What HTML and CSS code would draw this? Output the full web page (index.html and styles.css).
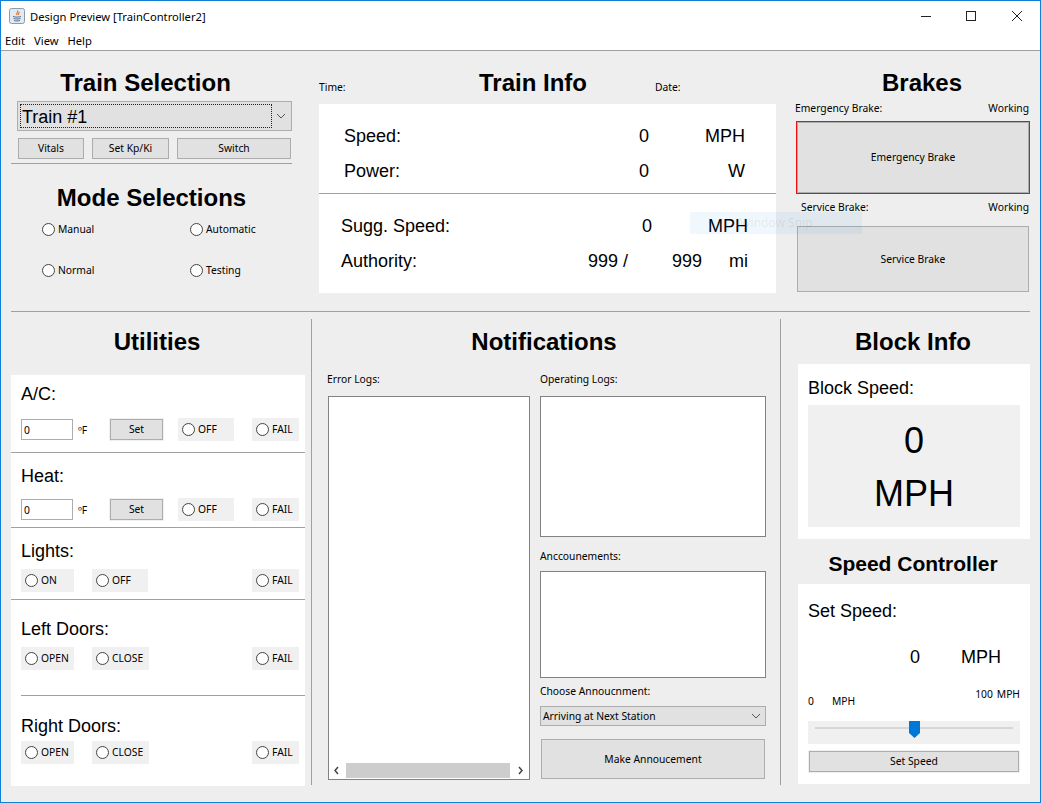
FILE: index.html
```html
<!DOCTYPE html>
<html lang="en">
  <head>
    <meta charset="UTF-8" />
    <title>Design Preview [TrainController2]</title>
    <link rel="stylesheet" href="styles.css">
  </head>
  <body>
    <div class="window">
      <div class="titlebar">
        <svg class="app-icon" width="16" height="16" viewBox="0 0 16 16">
          <rect x="0.5" y="0.5" width="15" height="15" rx="2" fill="#e4e9ef" stroke="#8c9aab" />
          <path d="M8.500 2.500c1.500 1.500-2 2.500-.5 4.500M10 4c.8 1-1.500 1.500-.5 3" fill="none" stroke="#e2762a" stroke-width="1.200" />
          <path d="M4 8.500c2 .8 6 .8 8 0M4.500 10.500c2 .7 5 .7 7 0M5 12.500c2 .6 4 .6 6 0" fill="none" stroke="#4a6f9c" />
        </svg>
        <span class="title-text">Design Preview [TrainController2]</span>
        <div class="win-controls">
          <svg width="10" height="10" viewBox="0 0 10 10"><path d="M0 5.500h10" stroke="#222" /></svg>
          <svg width="10" height="10" viewBox="0 0 10 10"><rect x="0.500" y="0.500" width="9" height="9" fill="none" stroke="#222" /></svg>
          <svg class="win-close" width="10" height="10" viewBox="0 0 10 10"><path d="M0 0l10 10M10 0L0 10" stroke="#222" /></svg>
        </div>
      </div>
      <div class="menubar">
        <span>Edit</span>
        <span>View</span>
        <span>Help</span>
      </div>

      <div class="top">
        <!-- Train selection and mode -->
        <section class="selection">
          <h2 class="title selection-title">Train Selection</h2>
          <div class="combo combo-large">
            <span class="combo-focus">Train #1</span>
            <svg class="chevron" width="10" height="6" viewBox="0 0 10 6"><path d="M1 1l4 4 4-4" fill="none" stroke="#555" /></svg>
          </div>
          <div class="train-buttons">
            <button class="btn btn-vitals">Vitals</button>
            <button class="btn btn-kp">Set Kp/Ki</button>
            <button class="btn btn-switch">Switch</button>
          </div>
          <div class="selection-rule"></div>
          <h2 class="title mode-title">Mode Selections</h2>
          <div class="mode-grid">
            <label class="radio"><input type="radio" />Manual</label>
            <label class="radio"><input type="radio" />Automatic</label>
            <label class="radio"><input type="radio" />Normal</label>
            <label class="radio"><input type="radio" />Testing</label>
          </div>
        </section>

        <!-- Train info -->
        <section class="info">
          <div class="info-head">
            <span class="small info-time">Time:</span>
            <h2 class="title info-title">Train Info</h2>
            <span class="small info-date">Date:</span>
          </div>
          <div class="info-panel">
            <div class="stats stats-top">
              <div class="stat"><span>Speed:</span><span class="num">0</span><span class="num">MPH</span></div>
              <div class="stat"><span>Power:</span><span class="num">0</span><span class="num">W</span></div>
            </div>
            <div class="stats stats-bottom">
              <div class="stat"><span>Sugg. Speed:</span><span class="num">0</span><span class="num">MPH</span></div>
              <div class="stat stat-authority"><span>Authority:</span><span class="num">999 /</span><span class="num">999</span><span class="num">mi</span></div>
            </div>
          </div>
        </section>

        <!-- Brakes -->
        <section class="brakes">
          <h2 class="title brakes-title">Brakes</h2>
          <div class="small brake-label"><span>Emergency Brake:</span><span>Working</span></div>
          <button class="btn btn-emergency">Emergency Brake</button>
          <div class="small brake-label brake-label-service"><span>Service Brake:</span><span>Working</span></div>
          <button class="btn btn-service">Service Brake</button>
        </section>

        <div class="snip-ghost">Window Snip</div>
      </div>

      <div class="main-rule"></div>

      <div class="bottom">
        <!-- Utilities -->
        <section class="utilities">
          <h2 class="title utilities-title">Utilities</h2>
          <div class="util-panel">
            <div class="util util-ac">
              <div class="util-label">A/C:</div>
              <div class="util-row">
                <div class="temp"><input class="temp-input" type="text" value="0" /><span class="small">ºF</span></div>
                <div class="set-box"><button class="btn">Set</button></div>
                <label class="radio radio-box box-off box-after-set"><input type="radio" />OFF</label>
                <label class="radio radio-box box-fail"><input type="radio" />FAIL</label>
              </div>
            </div>
            <div class="util util-heat">
              <div class="util-label">Heat:</div>
              <div class="util-row">
                <div class="temp"><input class="temp-input" type="text" value="0" /><span class="small">ºF</span></div>
                <div class="set-box"><button class="btn">Set</button></div>
                <label class="radio radio-box box-off box-after-set"><input type="radio" />OFF</label>
                <label class="radio radio-box box-fail"><input type="radio" />FAIL</label>
              </div>
            </div>
            <div class="util util-lights">
              <div class="util-label">Lights:</div>
              <div class="util-row">
                <label class="radio radio-box box-first"><input type="radio" />ON</label>
                <label class="radio radio-box box-off box-second"><input type="radio" />OFF</label>
                <label class="radio radio-box box-fail"><input type="radio" />FAIL</label>
              </div>
            </div>
            <div class="util util-left">
              <div class="util-label">Left Doors:</div>
              <div class="util-row">
                <label class="radio radio-box box-first"><input type="radio" />OPEN</label>
                <label class="radio radio-box box-close box-second"><input type="radio" />CLOSE</label>
                <label class="radio radio-box box-fail"><input type="radio" />FAIL</label>
              </div>
            </div>
            <div class="util-rule"></div>
            <div class="util util-right">
              <div class="util-label">Right Doors:</div>
              <div class="util-row">
                <label class="radio radio-box box-first"><input type="radio" />OPEN</label>
                <label class="radio radio-box box-close box-second"><input type="radio" />CLOSE</label>
                <label class="radio radio-box box-fail"><input type="radio" />FAIL</label>
              </div>
            </div>
          </div>
        </section>

        <div class="vline"></div>

        <!-- Notifications -->
        <section class="notifications">
          <h2 class="title notifications-title">Notifications</h2>
          <div class="notif-grid">
            <div class="notif-col">
              <div class="small notif-label error-label">Error Logs:</div>
              <div class="logbox error-box">
                <div class="hscroll">
                  <svg width="17" height="15" viewBox="0 0 17 15"><path d="M9 4l-3 3.500 3 3.500" fill="none" stroke="#444" stroke-width="1.500" /></svg>
                  <div class="hscroll-thumb"></div>
                  <svg width="19" height="15" viewBox="0 0 19 15"><path d="M9 4l3 3.500-3 3.500" fill="none" stroke="#444" stroke-width="1.500" /></svg>
                </div>
              </div>
            </div>
            <div class="notif-col">
              <div class="small notif-label">Operating Logs:</div>
              <div class="logbox ops-box"></div>
              <div class="small notif-label announce-label">Anccounements:</div>
              <div class="logbox announce-box"></div>
              <div class="small notif-label choose-label">Choose Annoucnment:</div>
              <div class="combo combo-small">
                <span>Arriving at Next Station</span>
                <svg class="chevron" width="10" height="6" viewBox="0 0 10 6"><path d="M1 1l4 4 4-4" fill="none" stroke="#555" /></svg>
              </div>
              <button class="btn btn-announce">Make Annoucement</button>
            </div>
          </div>
        </section>

        <div class="vline"></div>

        <!-- Block info and speed -->
        <section class="block-col">
          <h2 class="title block-title">Block Info</h2>
          <div class="white-panel block-panel">
            <div class="util-label">Block Speed:</div>
            <div class="block-speed">
              <div>0</div>
              <div>MPH</div>
            </div>
          </div>
          <h2 class="title speed-title">Speed Controller</h2>
          <div class="white-panel speed-panel">
            <div class="util-label">Set Speed:</div>
            <div class="speed-value"><span class="speed-num">0</span><span class="speed-unit">MPH</span></div>
            <div class="small speed-range">
              <div class="range-min"><span class="range-zero">0</span><span>MPH</span></div>
              <div class="range-max"><span>100</span><span>MPH</span></div>
            </div>
            <div class="slider">
              <div class="slider-track"></div>
              <svg class="slider-thumb" width="11" height="17" viewBox="0 0 11 17"><path d="M0 0h11v12l-5.500 5L0 12z" fill="#0078d7" /></svg>
            </div>
            <div class="speed-btn-box"><button class="btn">Set Speed</button></div>
          </div>
        </section>
      </div>
    </div>
  </body>
</html>
```

FILE: styles.css
```css
body {
  margin: 0;
  font-family: "Liberation Sans", Arial, sans-serif;
  color: #000;
}

.window {
  width: 1041px;
  height: 803px;
  box-sizing: border-box;
  border: 1px solid #0f7fd8;
  background-color: #eeeeee;
  display: flex;
  flex-direction: column;
  overflow: hidden;
}

.small,
.radio,
.btn,
.combo-small,
.temp-input {
  font-family: "Noto Sans", Tahoma, sans-serif;
  font-size: 10.3px;
}

.title {
  margin: 0;
  height: 28px;
  line-height: 28px;
  font-size: 24px;
  font-weight: bold;
  text-align: center;
}

/* Window chrome */
.titlebar {
  height: 30px;
  flex: none;
  background-color: white;
  display: flex;
  align-items: center;
  padding-left: 8px;
}

.app-icon {
  margin-right: 5px;
}

.title-text {
  font-family: "Noto Sans", sans-serif;
  font-size: 11.2px;
}

.win-controls {
  margin-left: auto;
  display: flex;
  gap: 35px;
  padding-right: 18px;
}

.win-close {
  margin-left: 1px;
}

.menubar {
  height: 19px;
  flex: none;
  background-color: white;
  border-bottom: 1px solid #a0a0a0;
  display: flex;
  gap: 9px;
  padding-left: 4px;
  font-family: "Noto Sans", sans-serif;
  font-size: 11.2px;
  line-height: 19px;
}

/* Common controls */
.btn {
  background-color: #e1e1e1;
  border: 1px solid #adadad;
  padding: 0 0 1px;
  color: #000;
  cursor: pointer;
}

.radio {
  display: flex;
  align-items: center;
  gap: 3px;
  height: 16px;
}

.radio input {
  appearance: none;
  width: 13px;
  height: 13px;
  margin: 0;
  flex: none;
  background-color: white;
  border: 1px solid #444;
  border-radius: 50%;
}

.combo {
  box-sizing: border-box;
  background-color: #e1e1e1;
  border: 1px solid #adadad;
  display: flex;
  align-items: center;
}

.chevron {
  margin-left: auto;
}

/* Top half */
.top {
  position: relative;
  display: flex;
  height: 260px;
  flex: none;
}

.selection {
  width: 275px;
  margin-left: 16px;
  margin-right: 19px;
  padding-top: 18px;
}

.selection-title {
  margin-right: 18px;
}

.combo-large {
  height: 30px;
  margin-top: 4px;
  padding: 2px 5px 2px 2px;
  font-size: 18px;
}

.combo-focus {
  box-sizing: border-box;
  width: 252px;
  height: 24px;
  line-height: 25px;
  padding-left: 1px;
  border: 1px dotted #222;
}

.train-buttons {
  display: flex;
  gap: 8px;
  margin: 7px 0 0 1px;
}

.train-buttons .btn {
  height: 21px;
}

.btn-vitals {
  width: 66px;
}

.btn-kp {
  width: 77px;
}

.btn-switch {
  width: 114px;
}

.selection-rule {
  height: 1px;
  margin: 4px 0 0 -6px;
  background-color: #a0a0a0;
}

.mode-title {
  margin-top: 20px;
  margin-right: 6px;
}

.mode-grid {
  display: grid;
  grid-template-columns: 148px 1fr;
  row-gap: 25px;
  margin-top: 9px;
  padding-left: 25px;
}

.info {
  width: 457px;
  margin-left: 8px;
  margin-right: 19px;
}

.info-head {
  display: flex;
  align-items: flex-end;
  height: 53px;
}

.info-time {
  width: 159px;
  height: 13px;
  line-height: 13px;
  margin-bottom: 10px;
}

.info-title {
  width: 110px;
  margin-bottom: 7px;
  white-space: nowrap;
}

.info-date {
  height: 13px;
  line-height: 13px;
  margin-left: 67px;
  margin-bottom: 10px;
}

.info-panel {
  height: 189px;
  background-color: white;
}

.stats {
  display: flex;
  flex-direction: column;
  gap: 11px;
  padding-top: 20px;
  font-size: 18px;
}

.stats-top {
  height: 69px;
  padding-left: 25px;
  padding-right: 31px;
  border-bottom: 1px solid #a0a0a0;
}

.stats-bottom {
  padding-left: 22px;
  padding-right: 28px;
}

.stat {
  display: grid;
  grid-template-columns: 1fr 40px 96px;
  height: 24px;
  line-height: 24px;
}

.stat-authority {
  grid-template-columns: 1fr 60px 74px 46px;
}

.num {
  text-align: right;
  white-space: nowrap;
}

.brakes {
  width: 234px;
  padding-top: 18px;
}

.brakes-title {
  padding-left: 20px;
}

.brake-label {
  display: flex;
  justify-content: space-between;
  height: 14px;
  line-height: 14px;
  margin-top: 4px;
}

.brake-label-service {
  margin-top: 6px;
  padding-left: 6px;
}

.btn-emergency {
  display: block;
  box-sizing: border-box;
  width: 234px;
  height: 73px;
  margin: 6px 0 0 1px;
  border-color: #e81010;
  box-shadow: inset 0 0 0 1px #adadad;
}

.btn-service {
  display: block;
  box-sizing: border-box;
  width: 232px;
  height: 66px;
  margin: 12px 0 0 2px;
}

/* Ghost of the snipping tool toast, it sits over the panels */
.snip-ghost {
  position: absolute;
  left: 689px;
  top: 161px;
  width: 172px;
  height: 22px;
  line-height: 22px;
  text-align: center;
  font-family: "Noto Sans", sans-serif;
  font-size: 12px;
  color: rgba(0, 0, 0, 0.08);
  background-color: rgba(0, 120, 215, 0.06);
}

.main-rule {
  height: 1px;
  flex: none;
  margin: 0 10px;
  background-color: #a0a0a0;
}

/* Bottom half */
.bottom {
  display: flex;
  flex: 1;
}

.vline {
  width: 1px;
  height: 466px;
  margin-top: 7px;
  flex: none;
  background-color: #a0a0a0;
}

.utilities {
  width: 294px;
  margin-left: 10px;
  margin-right: 6px;
  padding-top: 16px;
}

.utilities-title {
  margin-right: 2px;
}

.util-panel {
  height: 411px;
  margin-top: 19px;
  background-color: white;
}

.util {
  box-sizing: border-box;
  padding-left: 10px;
  padding-right: 6px;
}

.util-label {
  height: 22px;
  line-height: 22px;
  font-size: 18px;
}

.util-row {
  display: flex;
  height: 23px;
}

.util-ac {
  height: 78px;
  padding-top: 8px;
  border-bottom: 1px solid #a0a0a0;
}

.util-ac .util-row {
  margin-top: 13px;
}

.util-heat {
  height: 75px;
  padding-top: 12px;
  border-bottom: 1px solid #a0a0a0;
}

.util-heat .util-row {
  margin-top: 11px;
}

.util-lights {
  height: 72px;
  padding-top: 12px;
  border-bottom: 1px solid #a0a0a0;
}

.util-lights .util-row {
  margin-top: 7px;
}

.util-left {
  height: 95px;
  padding-top: 18px;
}

.util-left .util-row {
  margin-top: 7px;
}

.util-rule {
  height: 1px;
  margin-left: 10px;
  background-color: #a0a0a0;
}

.util-right {
  padding-top: 19px;
}

.util-right .util-row {
  margin-top: 4px;
}

.temp {
  width: 88px;
  height: 22px;
  display: flex;
  align-items: flex-end;
  gap: 5px;
  flex: none;
}

.temp-input {
  box-sizing: border-box;
  width: 52px;
  height: 21px;
  margin: 0;
  padding: 0 2px;
  border: 1px solid #adadad;
}

.temp .small {
  line-height: 19px;
}

.set-box {
  box-sizing: border-box;
  width: 55px;
  height: 23px;
  padding: 1px;
  background-color: #f0f0f0;
}

.set-box .btn {
  width: 53px;
  height: 21px;
  display: block;
}

.radio-box {
  box-sizing: border-box;
  height: 23px;
  padding-left: 4px;
  padding-bottom: 1px;
  background-color: #f0f0f0;
}

.radio-box input {
  margin-top: 1px;
}

.box-first {
  width: 53px;
}

.box-off {
  width: 56px;
}

.box-close {
  width: 57px;
}

.box-fail {
  width: 47px;
  margin-left: auto;
}

.box-second {
  margin-left: 18px;
}

.box-after-set {
  margin-left: 14px;
}

.notifications {
  width: 468px;
  padding-top: 16px;
  flex: none;
}

.notifications-title {
  margin-right: 4px;
}

.notif-grid {
  display: flex;
  gap: 10px;
  margin-top: 16px;
  padding-left: 16px;
}

.notif-col {
  display: flex;
  flex-direction: column;
  width: 226px;
}

.notif-col:first-child {
  width: 202px;
}

.notif-label {
  height: 14px;
  line-height: 14px;
}

.error-label {
  margin-left: -1px;
}

.logbox {
  box-sizing: border-box;
  margin-top: 10px;
  background-color: white;
  border: 1px solid #828282;
}

.error-box {
  height: 384px;
  display: flex;
  flex-direction: column;
  justify-content: flex-end;
  padding-bottom: 1px;
}

.hscroll {
  display: flex;
  height: 15px;
  align-items: center;
}

.hscroll-thumb {
  flex: 1;
  height: 15px;
  background-color: #cdcdcd;
}

.ops-box {
  height: 141px;
}

.announce-label {
  margin-top: 12px;
}

.announce-box {
  height: 107px;
  margin-top: 8px;
}

.choose-label {
  margin-top: 6px;
}

.combo-small {
  height: 20px;
  margin-top: 8px;
  padding: 0 4px 1px 2px;
}

.btn-announce {
  width: 224px;
  height: 40px;
  margin: 13px 0 0 1px;
}

.block-col {
  width: 232px;
  margin-left: 17px;
  padding-top: 16px;
}

.block-title {
  margin-right: 2px;
}

.white-panel {
  box-sizing: border-box;
  padding: 0 10px;
  background-color: white;
}

.block-panel {
  height: 175px;
  margin-top: 8px;
  padding-top: 13px;
}

.block-speed {
  height: 122px;
  margin-top: 6px;
  padding-top: 10px;
  box-sizing: border-box;
  background-color: #f0f0f0;
  font-size: 36px;
  line-height: 52px;
  text-align: center;
}

.block-speed div + div {
  padding-top: 1px;
}

.speed-title {
  margin-top: 11px;
  margin-right: 2px;
  font-size: 21px;
}

.speed-panel {
  height: 200px;
  margin-top: 6px;
  padding-top: 16px;
}

.speed-value {
  display: flex;
  height: 24px;
  line-height: 24px;
  margin-top: 23px;
  font-size: 18px;
}

.speed-num {
  width: 112px;
  text-align: right;
}

.speed-unit {
  margin-left: 41px;
}

.speed-range {
  display: flex;
  justify-content: space-between;
  height: 21px;
  margin-top: 18px;
  line-height: 14px;
}

.range-min {
  align-self: flex-end;
  display: flex;
}

.range-zero {
  width: 24px;
}

.range-max {
  display: flex;
  gap: 4px;
}

.slider {
  position: relative;
  height: 23px;
  margin-top: 13px;
  background-color: #f0f0f0;
  padding: 6px 7px 0;
  box-sizing: border-box;
}

.slider-track {
  height: 2px;
  background-color: #dcdcdc;
  border: 1px solid #d6d6d6;
  box-sizing: border-box;
}

.slider-thumb {
  position: absolute;
  left: 101px;
  top: 0;
}

.speed-btn-box {
  box-sizing: border-box;
  height: 23px;
  margin-top: 6px;
  padding: 1px;
  background-color: #f0f0f0;
}

.speed-btn-box .btn {
  display: block;
  width: 100%;
  height: 21px;
}
```
